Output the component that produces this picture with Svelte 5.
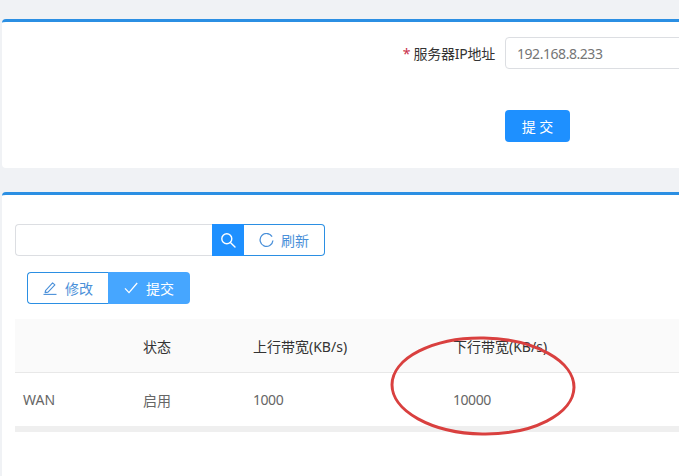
<script lang="ts">
    type Row = { name: string; status: string; up: string; down: string };

    const rows: Row[] = [{ name: 'WAN', status: '启用', up: '1000', down: '10000' }];

    let serverIp = $state('192.168.8.233');
    let keyword = $state('');
</script>

<div class="page">
    <section class="card server">
        <div class="form-row">
            <label class="label" for="ip"><span class="req">*</span> 服务器IP地址</label>
            <input id="ip" class="ip-input" type="text" bind:value={serverIp} />
        </div>
        <div class="form-row submit-row">
            <button class="submit">提 交</button>
        </div>
    </section>

    <section class="card list">
        <div class="search">
            <input class="search-input" type="text" bind:value={keyword} />
            <button class="search-btn" aria-label="搜索">
                <svg width="16" height="16" viewBox="0 0 16 16" fill="none" stroke="currentColor" stroke-width="1.4">
                    <circle cx="6.8" cy="6.8" r="5" />
                    <path d="M10.4 10.4 15 15" stroke-linecap="round" />
                </svg>
            </button>
            <button class="refresh">
                <svg width="15" height="15" viewBox="0 0 14 14" fill="none" stroke="currentColor" stroke-width="1.2">
                    <path d="M12.2 3.4A6 6 0 1 0 13 7" />
                </svg>
                <span>刷新</span>
            </button>
        </div>

        <div class="actions">
            <button class="edit">
                <svg width="14" height="14" viewBox="0 0 14 14" fill="none" stroke="currentColor" stroke-width="1.1">
                    <path d="M2.5 9.6 9.6 1.8l2.3 2.1-6.9 7.2-2.9.5z" stroke-linejoin="round" />
                    <path d="M0.5 13.4h13" />
                </svg>
                <span>修改</span>
            </button>
            <button class="save">
                <svg width="14" height="12" viewBox="0 0 14 12" fill="none" stroke="currentColor" stroke-width="1.3">
                    <path d="M1 6.4 5 10.6 13.2 1" />
                </svg>
                <span>提交</span>
            </button>
        </div>

        <table>
            <thead>
                <tr>
                    <th class="c-name"></th>
                    <th class="c-status">状态</th>
                    <th class="c-up">上行带宽(KB/s)</th>
                    <th>下行带宽(KB/s)</th>
                </tr>
            </thead>
            <tbody>
                {#each rows as row}
                    <tr>
                        <td>{row.name}</td>
                        <td>{row.status}</td>
                        <td class="num">{row.up}</td>
                        <td class="num">{row.down}</td>
                    </tr>
                {/each}
            </tbody>
        </table>
        <div class="scrollbar"></div>
    </section>

    <!-- hand-drawn annotation over the screenshot -->
    <svg class="circle" width="200" height="110" viewBox="0 0 200 110" fill="none">
        <ellipse cx="100" cy="55" rx="91" ry="48" stroke="#d9403f" stroke-width="3" />
    </svg>
</div>

<style>
    :global(body) {
        margin: 0;
        background: #f0f2f5;
        overflow: hidden;
    }

    .page {
        position: relative;
        width: 679px;
        height: 476px;
        padding-top: 19px;
        box-sizing: border-box;
        overflow: hidden;
        font-family: "Noto Sans", "Noto Sans CJK SC", sans-serif;
        font-size: 14px;
        color: #606266;
    }

    .card {
        background: #fff;
        border-top: 3px solid #2b8fe3;
        border-radius: 4px;
        margin-left: 2px;
        width: 720px;
        box-sizing: border-box;
    }

    .server {
        height: 149px;
        margin-bottom: 24px;
        padding-top: 15px;
    }

    .form-row {
        display: grid;
        grid-template-columns: 503px 1fr;
        align-items: center;
    }

    .submit-row {
        margin-top: 41px;
    }

    .label {
        grid-column: 1;
        text-align: right;
        padding-right: 10px;
        color: #333;
        letter-spacing: -0.25px;
    }

    .req {
        color: #c9304a;
    }

    .ip-input {
        height: 32px;
        width: 300px;
        box-sizing: border-box;
        padding: 0 11px;
        border: 1px solid #dcdee2;
        border-radius: 4px;
        font: inherit;
        letter-spacing: -0.45px;
        color: #757575;
        outline: none;
    }

    button {
        font: inherit;
        cursor: pointer;
        box-sizing: border-box;
    }

    .submit {
        grid-column: 2;
        width: 65px;
        height: 32px;
        border: none;
        border-radius: 4px;
        background: #1e90ff;
        color: #fff;
    }

    .list {
        height: 300px;
        padding: 29px 0 0 13px;
    }

    .search {
        display: flex;
        height: 32px;
    }

    .search-input {
        width: 197px;
        box-sizing: border-box;
        border: 1px solid #dcdee2;
        border-right: none;
        border-radius: 4px 0 0 4px;
        outline: none;
    }

    .search-btn {
        width: 32px;
        border: none;
        background: #1e90ff;
        color: #fff;
        padding: 0;
        display: flex;
        align-items: center;
        justify-content: center;
    }

    .refresh {
        width: 81px;
        border: 1px solid #2b8fe3;
        border-left: none;
        border-radius: 0 4px 4px 0;
        background: #fff;
        color: #4a90d9;
        padding: 0;
        display: flex;
        align-items: center;
        justify-content: center;
        gap: 7px;
    }

    .actions {
        display: flex;
        height: 32px;
        margin: 16px 0 15px 12px;
    }

    .actions button {
        width: 82px;
        padding: 0;
        display: flex;
        align-items: center;
        justify-content: center;
        gap: 8px;
    }

    .edit {
        width: 81px !important;
        border: 1px solid #2b8fe3;
        border-right: none;
        border-radius: 4px 0 0 4px;
        background: #fff;
        color: #4a90d9;
    }

    .save {
        border: none;
        border-radius: 0 4px 4px 0;
        background: #46a6ff;
        color: #fff;
    }

    table {
        width: 100%;
        table-layout: fixed;
        border-collapse: collapse;
    }

    th {
        height: 53px;
        padding: 0 8px;
        text-align: left;
        font-weight: 400;
        background: #fafafa;
        color: #333;
        border-bottom: 1px solid #e8e8e8;
    }

    td {
        height: 53px;
        padding: 0 8px;
        color: #666;
    }

    .num {
        letter-spacing: -0.45px;
    }

    .c-name {
        width: 104px;
    }

    .c-status {
        width: 94px;
    }

    .c-up {
        width: 184px;
    }

    .scrollbar {
        height: 6px;
        background: #efefef;
    }

    .circle {
        position: absolute;
        left: 383px;
        top: 331px;
        transform: rotate(1deg);
    }
</style>
